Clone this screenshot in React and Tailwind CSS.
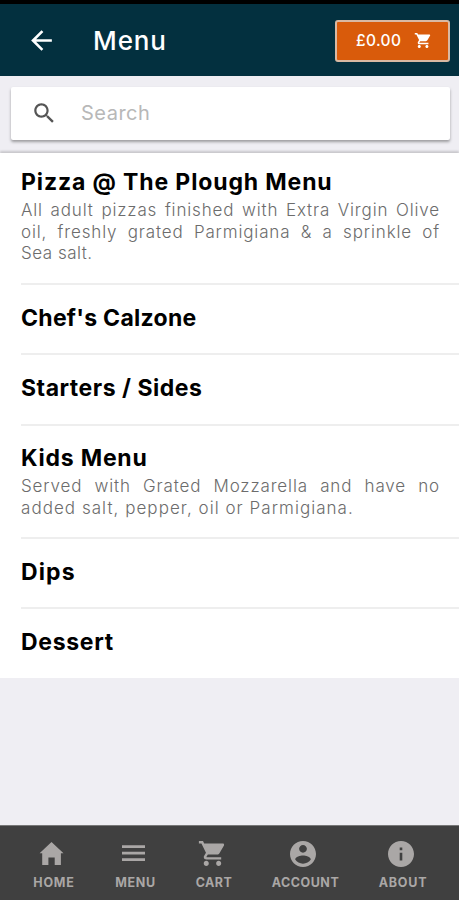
import React from 'react'
import { IoMdArrowBack, IoMdSearch, IoMdCart, IoMdContact, IoMdInformationCircle } from 'react-icons/io'

const categories = [
  {
    title: 'Pizza @ The Plough Menu',
    titleClass: 'tracking-[0.87px]',
    rowClass: 'h-[132px] pt-[14px]',
    lines: [
      { text: 'All adult pizzas finished with Extra Virgin Olive', className: 'tracking-[0.85px]' },
      { text: 'oil, freshly grated Parmigiana & a sprinkle of', className: 'tracking-[0.85px]' },
      { text: 'Sea salt.', className: 'tracking-[0.5px]' },
    ],
  },
  { title: "Chef's Calzone", titleClass: 'tracking-[0.28px]', rowClass: 'h-[70px] pt-[18px]' },
  { title: 'Starters / Sides', titleClass: 'tracking-[0.52px]', rowClass: 'h-[71px] pt-[18px]' },
  {
    title: 'Kids Menu',
    titleClass: 'tracking-[0.78px]',
    rowClass: 'h-[113px] pt-[17px]',
    lines: [
      { text: 'Served with Grated Mozzarella and have no', className: 'tracking-[0.85px]' },
      { text: 'added salt, pepper, oil or Parmigiana.', className: 'tracking-[1.04px]' },
    ],
  },
  { title: 'Dips', titleClass: 'tracking-[1.1px]', rowClass: 'h-[70px] pt-[18px]' },
  { title: 'Dessert', titleClass: 'tracking-[0.68px]', rowClass: 'h-[69px] pt-[18px]', last: true },
]

function HomeIcon({ size }) {
  return (
    <svg width={size} height={size} viewBox="0 0 31 31" fill="currentColor">
      <path d="M15.5 4 3.6 15.3h2.6V27h6.2v-7.6h6.3V27h6.2V15.3h2.6z" />
    </svg>
  )
}

function MenuIcon({ size }) {
  return (
    <svg width={size} height={size} viewBox="0 0 31 31" fill="currentColor">
      <path d="M4 7.2h23v2.7H4zM4 13.8h23v2.7H4zM4 20.3h23V23H4z" />
    </svg>
  )
}

const tabs = [
  { label: 'HOME', icon: HomeIcon, size: 31, className: 'w-[42px]', labelClass: 'tracking-[0.8px]' },
  { label: 'MENU', icon: MenuIcon, size: 31, className: 'w-[41px]', labelClass: 'tracking-[0.7px]' },
  { label: 'CART', icon: IoMdCart, size: 31, className: 'w-[36px]', labelClass: 'tracking-[0.4px]' },
  { label: 'ACCOUNT', icon: IoMdContact, size: 32, className: 'w-[67px]', labelClass: 'tracking-[0.5px]' },
  { label: 'ABOUT', icon: IoMdInformationCircle, size: 32, className: 'w-[48px]', labelClass: 'tracking-[0.8px]' },
]

function Header() {
  return (
    <header className="flex h-[76px] shrink-0 items-center border-t-4 border-black bg-[#03303f] pr-[9px] pl-[26px] text-white">
      <IoMdArrowBack size={31} />
      <h1 className="mt-px ml-9 text-[26px] leading-[32px] font-medium tracking-[0.9px]">Menu</h1>
      <button className="mt-[2px] ml-auto flex h-[42px] w-[115px] items-center rounded-[3px] border-2 border-[#d9b9a3] bg-[#d95b0b] pb-px pl-[19px]">
        <span className="w-[57px] text-left text-[15.5px] font-medium tracking-[0.35px]">£0.00</span>
        <IoMdCart size={19} />
      </button>
    </header>
  )
}

function SearchBar() {
  return (
    <div className="h-[77px] shrink-0 pt-[11px] pr-[9px] pl-[11px]">
      <div className="flex h-[53px] items-center rounded-[2px] bg-white pl-[20px] shadow-[0_2px_3px_rgba(0,0,0,0.35)]">
        <IoMdSearch size={26} className="mb-px text-[#555]" />
        <span className="mb-[2px] ml-[24px] text-[20px] tracking-[0.5px] text-[#b8b8b8]">Search</span>
      </div>
    </div>
  )
}

function Category({ title, titleClass, rowClass, lines = [], last }) {
  return (
    <li className={`${rowClass} ml-[21px] pr-[20px] ${last ? '' : 'border-b-2 border-[#eeeeee]'}`}>
      <h2 className={`${titleClass} mb-[3px] text-[23px] leading-[30px] font-bold whitespace-nowrap text-black`}>{title}</h2>
      {lines.map(({ text, className }, i) => (
        <p
          key={text}
          className={`${className} text-[17px] leading-[21.6px] font-light whitespace-nowrap text-[#6c6c6c] ${
            i < lines.length - 1 ? '-mr-px [text-align-last:justify]' : ''
          }`}
        >
          {text}
        </p>
      ))}
    </li>
  )
}

function TabBar() {
  return (
    <nav className="flex h-[75px] shrink-0 gap-10 border-t border-[#777] bg-[#404040] pt-[12px] pl-[33px] text-[#aaa7a6]">
      {tabs.map(({ label, icon: Icon, size, className, labelClass }) => (
        <a key={label} className={`${className} flex shrink-0 flex-col items-center`}>
          <span className="mr-[5px] flex h-[31px] items-center">
            <Icon size={size} />
          </span>
          <span className={`${labelClass} mt-[5px] text-[12.5px] leading-[18px] font-bold`}>{label}</span>
        </a>
      ))}
    </nav>
  )
}

export default function App() {
  return (
    <div className="flex h-[900px] w-[459px] flex-col overflow-hidden bg-[#efeef3] font-['Inter',sans-serif]">
      <Header />
      <SearchBar />
      <main className="flex-1">
        <ul className="bg-white shadow-[0_-2px_2px_rgba(0,0,0,0.16)]">
          {categories.map(c => <Category key={c.title} {...c} />)}
        </ul>
      </main>
      <TabBar />
    </div>
  )
}
